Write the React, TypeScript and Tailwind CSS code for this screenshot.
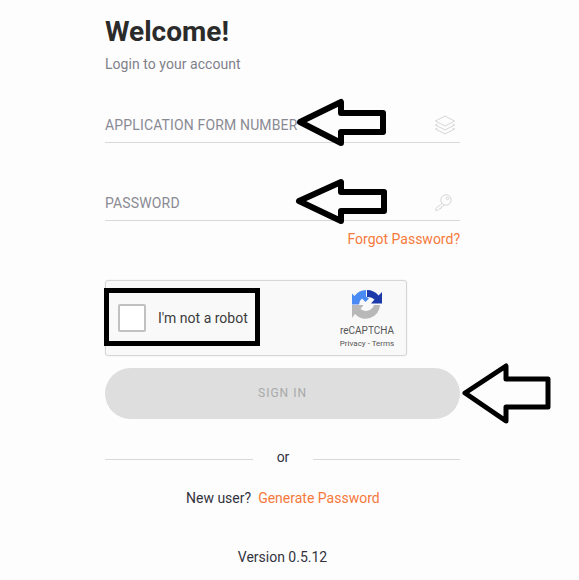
function Arrow({ points, width = 6 }: { points: string; width?: number }) {
  return (
    <svg className="absolute top-0 left-0 h-[580px] w-[579px]" viewBox="0 0 579 580" fill="none">
      <polygon points={points} stroke="#000" strokeWidth={width} strokeLinejoin="round" fill="none" />
    </svg>
  );
}

function Field({ label, icon }: { label: string; icon: React.ReactNode }) {
  return (
    <div className="flex h-[40px] items-center justify-between border-b border-[#d8d8d8] pt-[6px]">
      <span className="text-[14px] tracking-[0.15px] text-[#8a8a94]">{label}</span>
      {icon}
    </div>
  );
}

function LayersIcon() {
  return (
    <svg width="20" height="20" viewBox="0 0 20 20" fill="none" stroke="#d6d6d6" strokeWidth="1" strokeLinejoin="round" className="mr-[5px] -translate-y-[1px]">
      <path d="M10 1 L19.5 6 L10 11 L0.5 6 Z" />
      <path d="M2.5 9 L0.5 10 L10 15 L19.5 10 L17.5 9" />
      <path d="M2.5 13 L0.5 14 L10 19 L19.5 14 L17.5 13" />
    </svg>
  );
}

function KeyIcon() {
  return (
    <svg width="17" height="17" viewBox="0 0 17 17" fill="none" stroke="#d6d6d6" strokeWidth="1" strokeLinejoin="round" className="mr-[8px] -translate-y-[1px]">
      <circle cx="11" cy="6" r="5.2" />
      <circle cx="12.5" cy="4.5" r="1.2" />
      <path d="M7.2 9.4 L0.7 14.5 V16.3 H3 L4.6 14.6 H6 V13 H7.4 L9.2 11" />
    </svg>
  );
}

function RecaptchaLogo() {
  return (
    <svg width="32" height="32" viewBox="0 0 32 32">
      <path d="M16 1 A15 15 0 0 1 27.5 6.5 L31 3 V14.5 H20 L23.5 10.5 A9 9 0 0 0 16 8 Z" fill="#1c3aa9" />
      <path d="M15 1 A15 15 0 0 0 3.5 7 L1 4.5 V15.5 H8 A8 8 0 0 1 11 9.5 L14.5 13 L18 9.5 L15 7.5 Z" fill="#4a8af4" />
      <path d="M29 16 A14.5 14.5 0 0 1 4 25 L1 29 V16 H12.5 L9.5 20 A8.5 8.5 0 0 0 23 16 Z" fill="#b8b8b8" />
    </svg>
  );
}

export default function App() {
  return (
    <main className="relative h-[580px] overflow-hidden bg-[#fdfdfd] font-['Roboto',sans-serif]">
      <div className="ml-[105px] w-[355px] pt-[15px]">
        <h1 className="text-[28px] leading-[34px] font-bold text-[#2b2b2b]">Welcome!</h1>
        <p className="mt-[5px] text-[14px] leading-[20px] tracking-[0.05px] text-[#80808a]">Login to your account</p>

        <div className="mt-[29px]">
          <Field label="APPLICATION FORM NUMBER" icon={<LayersIcon />} />
        </div>
        <div className="mt-[38px]">
          <Field label="PASSWORD" icon={<KeyIcon />} />
        </div>

        <div className="mt-[8px] text-right text-[14px] leading-[20px] text-[#f5793b]">Forgot Password?</div>

        <div className="mt-[31px] flex h-[76px] w-[302px] items-center justify-between rounded-[3px] border border-[#d6d6d6] bg-[#f9f9f9] pr-[9px] pl-[12px] shadow-[0_0_2px_rgba(0,0,0,0.08)]">
          <div className="flex items-center gap-[12px]">
            <div className="h-[28px] w-[28px] rounded-[2px] border-2 border-[#c1c1c1] bg-white" />
            <span className="text-[14px] text-[#3c3c3c]">I'm not a robot</span>
          </div>
          <div className="flex w-[60px] translate-y-[1px] flex-col items-center">
            <RecaptchaLogo />
            <span className="mt-[3px] text-[10px] leading-[13px] text-[#555]">reCAPTCHA</span>
            <span className="mt-px text-[8px] leading-[11px] text-[#555]">Privacy - Terms</span>
          </div>
        </div>

        <button className="mt-[12px] flex h-[51px] w-full items-center justify-center rounded-full bg-[#dedede] pb-px text-[12px] tracking-[1px] text-[#a9a9a9]">
          SIGN IN
        </button>

        <div className="mt-[28px] flex items-center justify-between">
          <div className="mt-[4px] h-px w-[148px] bg-[#d8d8d8]" />
          <span className="text-[14px] leading-[20px] text-[#33333d]">or</span>
          <div className="mt-[4px] h-px w-[147px] bg-[#d8d8d8]" />
        </div>

        <p className="mt-[21px] pl-[81px] text-[14px] leading-[20px] text-[#33333d]">
          New user?
          <span className="ml-[7px] text-[#f5793b]">Generate Password</span>
        </p>

        <p className="mt-[39px] text-center text-[14px] leading-[20px] text-[#33333d]">Version 0.5.12</p>
      </div>

      {/* annotations drawn over the screenshot */}
      <Arrow points="300,122 341,102 341,113 383,113 383,132 341,132 341,143" />
      <Arrow points="299,201 341,182 341,192 384,192 384,211 341,211 341,221" />
      <Arrow width={5} points="465,393 506,366 506,379 548,379 548,407 506,407 506,421" />
      <div className="absolute top-[288px] left-[104px] h-[58px] w-[156px] border-[5px] border-black" />
    </main>
  );
}
